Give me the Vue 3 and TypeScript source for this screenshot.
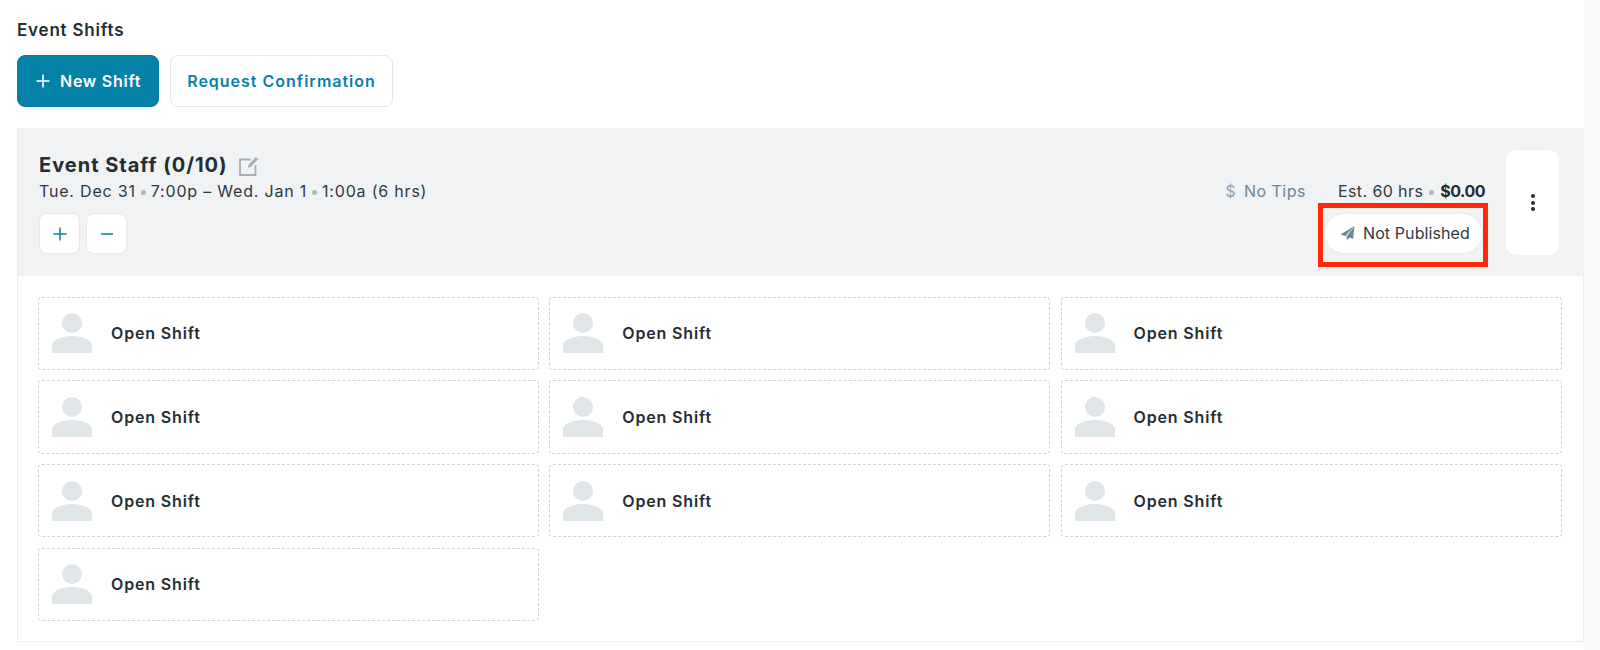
<script setup lang="ts">
const slots: number[] = Array.from({ length: 10 }, (_, i) => i)
</script>

<template>
  <div class="page">
    <h2 class="section-title">Event Shifts</h2>
    <div class="actions">
      <button class="btn primary">
        <svg class="btn-plus" viewBox="0 0 14 14" width="14" height="14">
          <path d="M7 0.5v13M0.5 7h13" stroke="#fff" stroke-width="1.6" fill="none" />
        </svg>
        New Shift
      </button>
      <button class="btn secondary">Request Confirmation</button>
    </div>

    <section class="card">
      <header class="card-head">
        <div class="info">
          <div class="title-row">
            <h3 class="title">Event Staff (0/10)</h3>
            <svg class="edit" viewBox="0 0 20 20" width="20" height="20">
              <path d="M11.5 3.5H1v15.5h15.5V9" fill="none" stroke="#a3b0b8" stroke-width="1.8" />
              <path d="M9 11.5l.4-2.6L16.8.9l2.4 2.4-7.6 7.8z" fill="#a3b0b8" />
            </svg>
          </div>
          <div class="when">
            Tue. Dec 31<span class="dot"></span>7:00p – Wed. Jan 1<span class="dot"></span>1:00a (6 hrs)
          </div>
          <div class="steppers">
            <button class="step">
              <svg viewBox="0 0 14 14" width="14" height="14"><path d="M7 0.5v13M0.5 7h13" stroke="#0b7fa5" stroke-width="1.5" fill="none" /></svg>
            </button>
            <button class="step">
              <svg viewBox="0 0 14 14" width="14" height="14"><path d="M1 7h12" stroke="#0b7fa5" stroke-width="1.5" fill="none" /></svg>
            </button>
          </div>
        </div>

        <div class="summary">
          <div class="summary-row">
            <span class="tips"><span class="tips-sign">$</span>No Tips</span>
            <span class="est">Est. 60 hrs<span class="dot est-dot"></span><b>$0.00</b></span>
          </div>
          <div class="pill-wrap">
            <div class="pill">
              <svg viewBox="0 0 14 14" width="15" height="14">
                <path d="M14 0L0 8.5l5 1.6z" fill="#6e8696" />
                <path d="M14 0L6 10.7l.5 3.3 2.6-2.6 3.5 1.5z" fill="#6e8696" />
              </svg>
              <span class="pill-text">Not Published</span>
            </div>
            <div class="highlight"></div>
          </div>
        </div>

        <button class="more">
          <span></span><span></span><span></span>
        </button>
      </header>

      <div class="grid">
        <div v-for="s in slots" :key="s" class="slot">
          <svg class="avatar" viewBox="0 0 40 40" width="40" height="40">
            <circle cx="20" cy="10" r="10" fill="#e0e5e8" />
            <path d="M0 40V33C0 27 9 23 20 23s20 4 20 10v7z" fill="#e0e5e8" />
          </svg>
          <span class="slot-label">Open Shift</span>
        </div>
      </div>
    </section>
  </div>
</template>

<style>
html, body { margin: 0; background: #fff; }
</style>

<style scoped>
.page {
  box-sizing: border-box;
  width: 1600px;
  height: 650px;
  overflow: hidden;
  padding: 21px 16px 0 17px;
  background: linear-gradient(to right, #fff 1584px, #fafafa 1584px);
  font-family: Inter, "Liberation Sans", sans-serif;
  color: #232d33;
}
.section-title {
  margin: 0;
  font-size: 17px;
  letter-spacing: 0.8px;
  line-height: 19px;
  font-weight: 600;
}
.actions {
  display: flex;
  gap: 11px;
  margin-top: 15px;
}
.btn {
  box-sizing: border-box;
  height: 52px;
  border-radius: 8px;
  font-family: inherit;
  font-size: 16px;
  font-weight: 600;
  display: flex;
  align-items: center;
}
.primary {
  width: 142px;
  padding: 0 0 0 18px;
  gap: 10px;
  letter-spacing: 0.75px;
  background: #0581a7;
  border: 1px solid #0581a7;
  color: #fff;
}
.secondary {
  width: 223px;
  justify-content: center;
  padding: 0;
  letter-spacing: 1px;
  background: #fff;
  border: 1px solid #e4e8ea;
  color: #0b7fa5;
}
.card {
  box-sizing: border-box;
  margin-top: 21px;
  width: 1567px;
  height: 514px;
  border: 1px solid #eceff0;
  border-top: 0;
}
.card-head {
  box-sizing: border-box;
  height: 148px;
  padding: 22px 24px 0 21px;
  background: #f0f2f4;
  display: flex;
  align-items: flex-start;
}
.info { flex: 1; }
.title-row {
  display: flex;
  align-items: center;
  gap: 11px;
  height: 30px;
}
.title {
  margin: 0;
  font-size: 20px;
  letter-spacing: 1px;
  font-weight: 700;
  line-height: 30px;
}
.edit { margin-top: 1px; }
.when {
  margin-top: 1px;
  font-size: 16px;
  letter-spacing: 0.8px;
  line-height: 20px;
  color: #2f393f;
}
.dot {
  display: inline-block;
  width: 5px;
  height: 5px;
  border-radius: 50%;
  background: #a9b9c0;
  margin: 0 5px;
  vertical-align: middle;
}
.est-dot { margin: 0 6px; }
.steppers {
  display: flex;
  gap: 6px;
  margin-top: 12px;
}
.step {
  box-sizing: border-box;
  width: 41px;
  height: 41px;
  padding: 0;
  background: #fff;
  border: 1px solid #e6e9eb;
  border-radius: 8px;
  display: flex;
  align-items: center;
  justify-content: center;
}
.summary {
  display: flex;
  flex-direction: column;
  align-items: flex-end;
  margin-right: 21px;
  padding-top: 31px;
}
.summary-row {
  display: flex;
  gap: 32px;
  font-size: 16px;
  line-height: 20px;
}
.tips { color: #6e8696; letter-spacing: 0.5px; }
.tips-sign { color: #8fa3af; margin-right: 8px; }
.est { color: #2f393f; letter-spacing: 0.4px; }
.est b { font-weight: 700; letter-spacing: -0.5px; color: #232d33; }
.pill-wrap {
  position: relative;
  margin-top: 12px;
  margin-right: 2px;
}
.pill {
  box-sizing: border-box;
  width: 159px;
  height: 41px;
  padding: 0 0 1px 15px;
  background: #fff;
  border: 1px solid #e6e9eb;
  border-radius: 21px;
  display: flex;
  align-items: center;
  gap: 8px;
  font-size: 16px;
  letter-spacing: 0.1px;
  color: #2f393f;
}
.highlight {
  position: absolute;
  left: -6px;
  right: -5px;
  top: -10px;
  bottom: -13px;
  border: 5px solid #fb2a0c;
  pointer-events: none;
}
.more {
  box-sizing: border-box;
  width: 53px;
  height: 105px;
  padding: 0;
  background: #fff;
  border: 0;
  border-radius: 10px;
  display: flex;
  flex-direction: column;
  align-items: center;
  justify-content: center;
  gap: 2.5px;
}
.more span {
  width: 4px;
  height: 4px;
  border-radius: 50%;
  background: #232d33;
}
.grid {
  display: grid;
  grid-template-columns: repeat(3, 501px);
  grid-auto-rows: 73.5px;
  column-gap: 10.25px;
  row-gap: 10.2px;
  padding: 20.5px 20px 0 20px;
}
.slot {
  box-sizing: border-box;
  display: flex;
  align-items: center;
  gap: 19px;
  padding-left: 13px;
  border: 1px dashed #cbd5da;
  border-radius: 4px;
}
.slot-label {
  font-size: 16px;
  letter-spacing: 0.85px;
  font-weight: 600;
  color: #232d33;
}
</style>
